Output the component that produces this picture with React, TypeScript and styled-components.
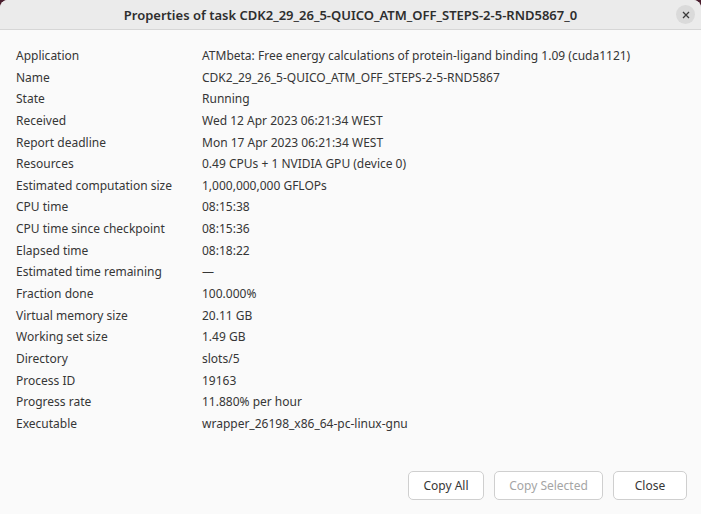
import { Fragment } from "react";
import styled, { createGlobalStyle } from "styled-components";

const GlobalStyle = createGlobalStyle`
  html, body {
    margin: 0;
    padding: 0;
    background: #4a1e2e;
  }
  body {
    font-family: "Noto Sans", "DejaVu Sans", sans-serif;
    color: #3d3d3d;
  }
`;

const Window = styled.div`
  width: 701px;
  height: 514px;
  display: flex;
  flex-direction: column;
  background: #fafafa;
  border-radius: 8px 8px 0 0;
  overflow: hidden;
`;

const TitleBar = styled.div`
  height: 29px;
  flex-shrink: 0;
  display: flex;
  align-items: center;
  justify-content: center;
  position: relative;
  background: #ebebeb;
  border-bottom: 1px solid #d6d6d6;
`;

const Title = styled.div`
  font-size: 13px;
  font-weight: 600;
  color: #2e2e2e;
`;

const CloseCircle = styled.button`
  position: absolute;
  right: 6px;
  top: 5px;
  width: 19px;
  height: 19px;
  border-radius: 50%;
  border: none;
  padding: 0;
  background: #dadada;
  display: flex;
  align-items: center;
  justify-content: center;
`;

const Body = styled.div`
  flex: 1;
  display: grid;
  grid-template-columns: 186px 1fr;
  grid-auto-rows: 21.65px;
  align-content: start;
  padding: 17px 16px 0 16px;
  font-size: 12px;
`;

const Label = styled.div`
  color: #363636;
  white-space: nowrap;
`;

const Value = styled.div`
  color: #363636;
  white-space: nowrap;
`;

const Footer = styled.div`
  display: flex;
  justify-content: flex-end;
  gap: 10px;
  padding: 0 14px 14px 0;
`;

const Button = styled.button<{ $width: number; $disabled?: boolean }>`
  width: ${p => p.$width}px;
  height: 29px;
  padding: 0;
  border: 1px solid #cfcfcf;
  border-radius: 5px;
  background: #ffffff;
  font-family: "Noto Sans", sans-serif;
  font-size: 12px;
  color: ${p => (p.$disabled ? "#a5a5a5" : "#363636")};
`;

const rows: [string, string][] = [
  ["Application", "ATMbeta: Free energy calculations of protein-ligand binding 1.09 (cuda1121)"],
  ["Name", "CDK2_29_26_5-QUICO_ATM_OFF_STEPS-2-5-RND5867"],
  ["State", "Running"],
  ["Received", "Wed 12 Apr 2023 06:21:34 WEST"],
  ["Report deadline", "Mon 17 Apr 2023 06:21:34 WEST"],
  ["Resources", "0.49 CPUs + 1 NVIDIA GPU (device 0)"],
  ["Estimated computation size", "1,000,000,000 GFLOPs"],
  ["CPU time", "08:15:38"],
  ["CPU time since checkpoint", "08:15:36"],
  ["Elapsed time", "08:18:22"],
  ["Estimated time remaining", "—"],
  ["Fraction done", "100.000%"],
  ["Virtual memory size", "20.11 GB"],
  ["Working set size", "1.49 GB"],
  ["Directory", "slots/5"],
  ["Process ID", "19163"],
  ["Progress rate", "11.880% per hour"],
  ["Executable", "wrapper_26198_x86_64-pc-linux-gnu"],
];

const App = () => {
  return (
    <>
      <GlobalStyle />
      <Window>
        <TitleBar>
          <Title>Properties of task CDK2_29_26_5-QUICO_ATM_OFF_STEPS-2-5-RND5867_0</Title>
          <CloseCircle aria-label="Close">
            <svg width="8" height="8" viewBox="0 0 8 8">
              <path d="M1 1 L7 7 M7 1 L1 7" stroke="#3a3a3a" strokeWidth="1.3" />
            </svg>
          </CloseCircle>
        </TitleBar>
        <Body>
          {rows.map(([label, value]) => (
            <Fragment key={label}>
              <Label>{label}</Label>
              <Value>{value}</Value>
            </Fragment>
          ))}
        </Body>
        <Footer>
          <Button $width={76}>Copy All</Button>
          <Button $width={109} $disabled>Copy Selected</Button>
          <Button $width={74}>Close</Button>
        </Footer>
      </Window>
    </>
  );
};

export default App;
